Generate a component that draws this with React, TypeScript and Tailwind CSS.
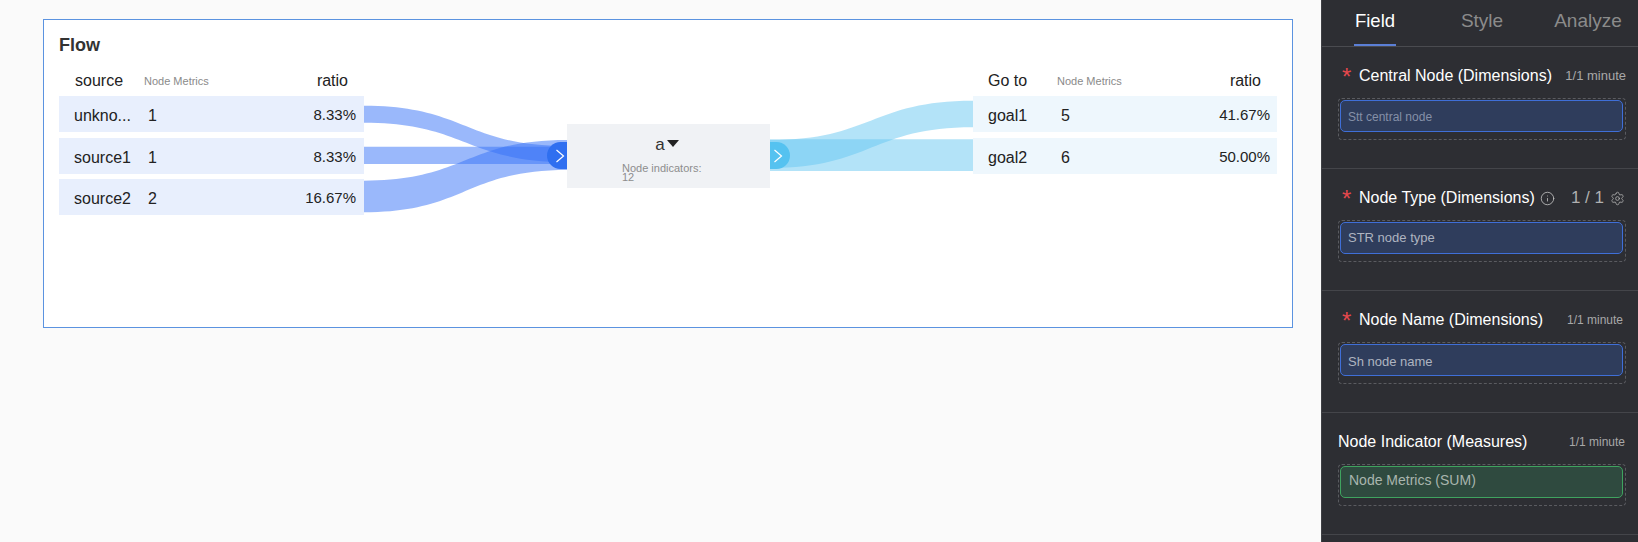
import React from "react";
import { Info, Settings } from "lucide-react";

type Row = { name: string; value: string; pct: string };

const leftRows: Row[] = [
  { name: "unkno...", value: "1", pct: "8.33%" },
  { name: "source1", value: "1", pct: "8.33%" },
  { name: "source2", value: "2", pct: "16.67%" },
];
const rightRows: Row[] = [
  { name: "goal1", value: "5", pct: "41.67%" },
  { name: "goal2", value: "6", pct: "50.00%" },
];

function ribbon(w: number, a0: number, a1: number, b0: number, b1: number) {
  const m = w / 2;
  return `M0 ${a0} C${m} ${a0} ${m} ${b0} ${w} ${b0} L${w} ${b1} C${m} ${b1} ${m} ${a1} 0 ${a1} Z`;
}

function Chevron() {
  return (
    <svg width="10" height="16" viewBox="0 0 10 16" fill="none">
      <path d="M1.5 2 L8.5 8 L1.5 14" stroke="#ffffff" strokeWidth="1.2" />
    </svg>
  );
}

function Section({
  star,
  title,
  right,
  tone,
  label,
  labelClass,
}: {
  star?: boolean;
  title: React.ReactNode;
  right: React.ReactNode;
  tone: "blue" | "green";
  label: string;
  labelClass: string;
}) {
  return (
    <section className="h-[122px] border-b border-[#44454a] pl-[16px] pr-[12px] pt-[19px]">
      <div className="flex h-[20px] items-center justify-between">
        <div className="flex items-center text-[16px] text-white">
          {star && (
            <span className="ml-[4px] h-[20px] w-[17px] pt-px text-[24px] leading-[20px] text-[#e5484d]">*</span>
          )}
          {title}
        </div>
        {right}
      </div>
      <div className="mt-[12px] h-[42px] rounded-[4px] border border-dashed border-[#5a5b60] pl-px pr-[2px] pt-px">
        <div
          className={
            tone === "blue"
              ? `flex h-[32px] items-center rounded-[5px] border-[1.5px] border-[#3f6fd8] bg-[#2f3d5c] ${labelClass}`
              : `flex h-[32px] items-center rounded-[5px] border-[1.5px] border-[#3fa35f] bg-[#2f4a3f] ${labelClass}`
          }
        >
          {label}
        </div>
      </div>
    </section>
  );
}

export default function App() {
  return (
    <div className="flex h-[542px] w-[1638px] overflow-hidden bg-[#fafafa] font-['Liberation_Sans',Arial,sans-serif]">
      <main className="w-[1321px] shrink-0 pl-[43px] pt-[19px]">
        <div className="h-[309px] w-[1250px] border border-[#5b93e0] bg-white pl-[15px] pt-[15px]">
          <h2 className="h-[21px] text-[18px] font-bold leading-[21px] text-[#333333]">Flow</h2>
          <div className="mt-[12px] flex items-start">
            {/* left table */}
            <div className="w-[305px] shrink-0 text-[16px] text-[#222222]">
              <div className="flex h-[28px] items-center pb-[2px]">
                <span className="ml-[16px] w-[69px]">source</span>
                <span className="text-[11px] text-[#8a8a8a]">Node Metrics</span>
                <span className="ml-auto mr-[16px]">ratio</span>
              </div>
              {leftRows.map((r, i) => (
                <div
                  key={r.name}
                  className={
                    i === 0
                      ? "flex h-[36px] items-center bg-[#e8effd] pt-[3px]"
                      : i === 1
                        ? "mt-[6px] flex h-[36px] items-center bg-[#e8effd] pt-[3px]"
                        : "mt-[5px] flex h-[36px] items-center bg-[#e8effd] pt-[3px]"
                  }
                >
                  <span className="ml-[15px] w-[74px]">{r.name}</span>
                  <span>{r.value}</span>
                  <span className="ml-auto mr-[8px] text-[15px]">{r.pct}</span>
                </div>
              ))}
            </div>

            {/* links in */}
            <svg width="203" height="119" viewBox="0 0 203 119" className="mt-[28px] shrink-0">
              <path d={ribbon(203, 9.7, 26.7, 50, 66)} fill="#3672f7" fillOpacity="0.5" />
              <path d={ribbon(203, 50.7, 68, 50.7, 68)} fill="#3672f7" fillOpacity="0.5" />
              <path d={ribbon(203, 84.7, 116.3, 44, 74)} fill="#3672f7" fillOpacity="0.5" />
            </svg>

            {/* center node */}
            <div className="relative mt-[56px] h-[64px] w-[203px] shrink-0 bg-[#f0f2f5]">
              <div className="absolute left-[-20px] top-[18px] flex h-[27px] w-[20px] items-center justify-end rounded-l-full bg-[#2f6ff0] pr-[2px]">
                <Chevron />
              </div>
              <div className="absolute left-[203px] top-[18px] flex h-[27px] w-[20px] items-center justify-start rounded-r-full bg-[#55c2f0] pl-[3px]">
                <Chevron />
              </div>
              <div className="flex h-[40px] items-center justify-center pr-[3px] pt-[1px] text-[17px] text-[#333333]">
                <span>a</span>
                <svg width="12" height="7" viewBox="0 0 12 7" className="ml-[2px] mb-[3px]">
                  <path d="M0 0 H12 L6 7 Z" fill="#222222" />
                </svg>
              </div>
              <div className="pl-[55px] text-[11px] leading-[9px] text-[#8d8d8d]">
                <div>Node indicators:</div>
                <div>12</div>
              </div>
            </div>

            {/* links out */}
            <svg width="203" height="119" viewBox="0 0 203 119" className="mt-[28px] shrink-0">
              <path d={ribbon(203, 44, 72, 4.7, 31.3)} fill="#68c8f2" fillOpacity="0.5" />
              <path d={ribbon(203, 43.3, 75, 43.3, 75)} fill="#68c8f2" fillOpacity="0.5" />
            </svg>

            {/* right table */}
            <div className="w-[304px] shrink-0 text-[16px] text-[#222222]">
              <div className="flex h-[28px] items-center pb-[2px]">
                <span className="ml-[15px] w-[69px]">Go to</span>
                <span className="text-[11px] text-[#8a8a8a]">Node Metrics</span>
                <span className="ml-auto mr-[16px]">ratio</span>
              </div>
              {rightRows.map((r, i) => (
                <div
                  key={r.name}
                  className={
                    i === 0
                      ? "flex h-[36px] items-center bg-[#eef7fd] pt-[3px]"
                      : "mt-[6px] flex h-[36px] items-center bg-[#eef7fd] pt-[3px]"
                  }
                >
                  <span className="ml-[15px] w-[73px]">{r.name}</span>
                  <span>{r.value}</span>
                  <span className="ml-auto mr-[7px] text-[15px]">{r.pct}</span>
                </div>
              ))}
            </div>
          </div>
        </div>
      </main>

      <aside className="w-[317px] shrink-0 border-l border-[#3f4045] bg-[#2d2e33]">
        <div className="flex h-[47px] border-b border-[#4a4b50] pl-[1px] text-[19px] text-[#8b8b8b]">
          <div className="flex w-[104px] shrink-0 justify-center">
            <span className="flex items-center border-b-2 border-[#5b7fd6] px-px pb-[2px] text-[18.5px] text-white">Field</span>
          </div>
          <div className="flex w-[110px] shrink-0 items-center justify-center pb-[4px]">Style</div>
          <div className="ml-[2px] flex w-[98px] shrink-0 items-center justify-center pb-[4px]">Analyze</div>
        </div>

        <Section
          star
          title="Central Node (Dimensions)"
          right={<span className="text-[13px] text-[#a8a8a8]">1/1 minute</span>}
          tone="blue"
          label="Stt central node"
          labelClass="pl-[7px] pt-[2px] text-[12px] text-[#8590a8]"
        />
        <Section
          star
          title={
            <>
              Node Type (Dimensions)
              <Info size={15} strokeWidth={1.3} className="ml-[5px] text-[#c4c4c4]" />
            </>
          }
          right={
            <span className="flex items-center text-[17px] text-[#b0b0b0]">
              1 / 1
              <Settings size={15} strokeWidth={1.3} className="ml-[6px] mr-px text-[#b0b0b0]" />
            </span>
          }
          tone="blue"
          label="STR node type"
          labelClass="pl-[7px] text-[13px] text-[#aeb4c0]"
        />
        <Section
          star
          title="Node Name (Dimensions)"
          right={<span className="pr-[3px] text-[12px] text-[#a8a8a8]">1/1 minute</span>}
          tone="blue"
          label="Sh node name"
          labelClass="pl-[7px] pt-[3px] text-[13px] text-[#aeb4c0]"
        />
        <Section
          title="Node Indicator (Measures)"
          right={<span className="pr-px text-[12px] text-[#a8a8a8]">1/1 minute</span>}
          tone="green"
          label="Node Metrics (SUM)"
          labelClass="pl-[8px] pb-[3px] text-[14px] text-[#a9b5ae]"
        />
      </aside>
    </div>
  );
}
